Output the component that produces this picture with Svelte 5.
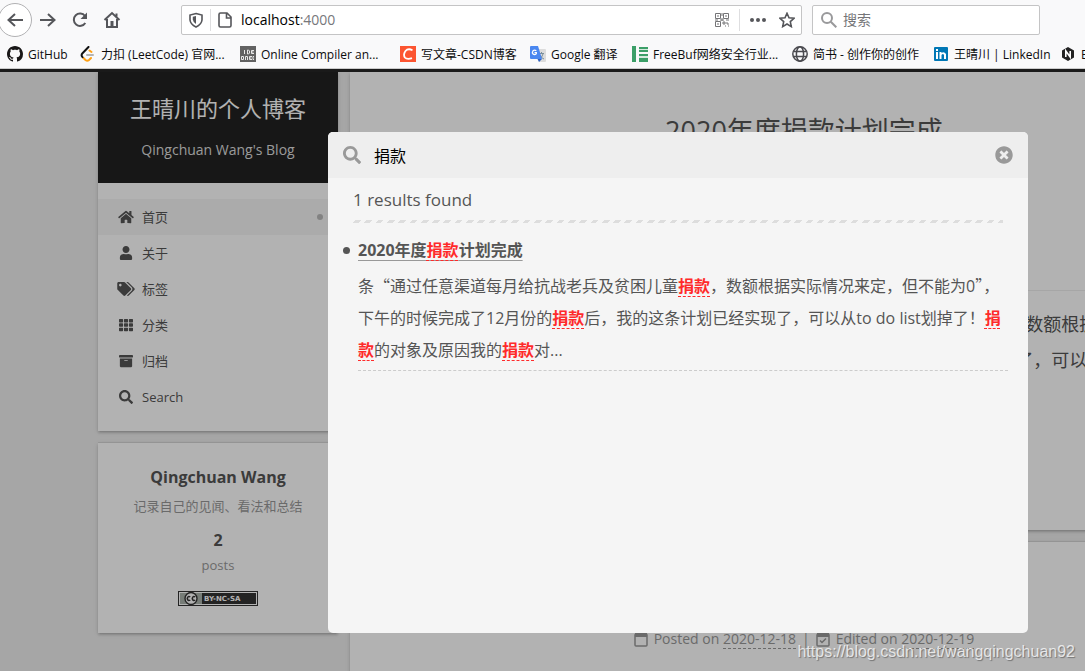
<script lang="ts">
  let query = $state("捐款");
  let address = $state("");
  let webSearch = $state("");

  const bookmarks = [
    { icon: "github", label: "GitHub" },
    { icon: "leetcode", label: "力扣 (LeetCode) 官网..." },
    { icon: "ideone", label: "Online Compiler an..." },
    { icon: "csdn", label: "写文章-CSDN博客" },
    { icon: "translate", label: "Google 翻译" },
    { icon: "freebuf", label: "FreeBuf网络安全行业..." },
    { icon: "globe", label: "简书 - 创作你的创作" },
    { icon: "linkedin", label: "王晴川 | LinkedIn" },
    { icon: "hexagon", label: "E" },
  ];

  const menu = [
    { icon: "home", label: "首页", active: true },
    { icon: "user", label: "关于" },
    { icon: "tags", label: "标签" },
    { icon: "th", label: "分类" },
    { icon: "archive", label: "归档" },
    { icon: "search", label: "Search" },
  ];

  const searchPath =
    "M505 442.7L405.3 343c-4.5-4.5-10.6-7-17-7H372c27.6-35.3 44-79.7 44-128C416 93.1 322.9 0 208 0S0 93.1 0 208s93.1 208 208 208c48.3 0 92.7-16.4 128-44v16.3c0 6.4 2.5 12.5 7 17l99.7 99.7c9.4 9.4 24.6 9.4 33.9 0l28.3-28.3c9.4-9.4 9.4-24.6.1-34zM208 336c-70.7 0-128-57.2-128-128 0-70.7 57.2-128 128-128 70.7 0 128 57.2 128 128 0 70.7-57.2 128-128 128z";

  const menuIcons: Record<string, { box: string; d: string }> = {
    home: {
      box: "0 0 576 512",
      d: "M280.37 148.26L96 300.11V464a16 16 0 0 0 16 16l112.06-.29a16 16 0 0 0 15.92-16V368a16 16 0 0 1 16-16h64a16 16 0 0 1 16 16v95.64a16 16 0 0 0 16 16.05L464 480a16 16 0 0 0 16-16V300L295.67 148.26a12.19 12.19 0 0 0-15.3 0zM571.6 251.47L488 182.56V44.05a12 12 0 0 0-12-12h-56a12 12 0 0 0-12 12v72.61L318.47 43a48 48 0 0 0-61 0L4.34 251.47a12 12 0 0 0-1.6 16.9l25.5 31A12 12 0 0 0 45.15 301l235.22-193.74a12.19 12.19 0 0 1 15.3 0L530.9 301a12 12 0 0 0 16.9-1.6l25.5-31a12 12 0 0 0-1.7-16.93z",
    },
    user: {
      box: "0 0 448 512",
      d: "M224 256c70.7 0 128-57.3 128-128S294.7 0 224 0 96 57.3 96 128s57.3 128 128 128zm89.6 32h-16.7c-22.2 10.2-46.9 16-72.9 16s-50.6-5.8-72.9-16h-16.7C60.2 288 0 348.2 0 422.4V464c0 26.5 21.5 48 48 48h352c26.5 0 48-21.5 48-48v-41.6c0-74.2-60.2-134.4-134.4-134.4z",
    },
    tags: {
      box: "0 0 640 512",
      d: "M497.941 225.941L286.059 14.059A48 48 0 0 0 252.118 0H48C21.49 0 0 21.49 0 48v204.118a48 48 0 0 0 14.059 33.941l211.882 211.882c18.744 18.745 49.136 18.746 67.882 0l204.118-204.118c18.745-18.745 18.745-49.137 0-67.882zM112 160c-26.51 0-48-21.49-48-48s21.49-48 48-48 48 21.49 48 48-21.49 48-48 48zm513.941 133.823L421.823 497.941c-18.745 18.745-49.137 18.745-67.882 0l-.36-.36L527.64 323.522c16.999-16.999 26.362-39.6 26.362-63.64s-9.362-46.641-26.362-63.64L331.397 0h48.721a48 48 0 0 1 33.941 14.059l211.882 211.882c18.745 18.745 18.745 49.137 0 67.882z",
    },
    th: {
      box: "0 0 512 512",
      d: "M24 32h101a24 24 0 0 1 24 24v80a24 24 0 0 1-24 24H24a24 24 0 0 1-24-24V56a24 24 0 0 1 24-24zM205 32h102a24 24 0 0 1 24 24v80a24 24 0 0 1-24 24H205a24 24 0 0 1-24-24V56a24 24 0 0 1 24-24zM387 32h101a24 24 0 0 1 24 24v80a24 24 0 0 1-24 24H387a24 24 0 0 1-24-24V56a24 24 0 0 1 24-24zM24 192h101a24 24 0 0 1 24 24v80a24 24 0 0 1-24 24H24a24 24 0 0 1-24-24v-80a24 24 0 0 1 24-24zM205 192h102a24 24 0 0 1 24 24v80a24 24 0 0 1-24 24H205a24 24 0 0 1-24-24v-80a24 24 0 0 1 24-24zM387 192h101a24 24 0 0 1 24 24v80a24 24 0 0 1-24 24H387a24 24 0 0 1-24-24v-80a24 24 0 0 1 24-24zM24 352h101a24 24 0 0 1 24 24v80a24 24 0 0 1-24 24H24a24 24 0 0 1-24-24v-80a24 24 0 0 1 24-24zM205 352h102a24 24 0 0 1 24 24v80a24 24 0 0 1-24 24H205a24 24 0 0 1-24-24v-80a24 24 0 0 1 24-24zM387 352h101a24 24 0 0 1 24 24v80a24 24 0 0 1-24 24H387a24 24 0 0 1-24-24v-80a24 24 0 0 1 24-24z",
    },
    archive: {
      box: "0 0 512 512",
      d: "M32 448c0 17.7 14.3 32 32 32h384c17.7 0 32-14.3 32-32V160H32v288zm160-212c0-6.6 5.4-12 12-12h104c6.6 0 12 5.4 12 12v8c0 6.6-5.4 12-12 12H204c-6.6 0-12-5.4-12-12v-8zM480 32H32C14.3 32 0 46.3 0 64v48c0 8.8 7.2 16 16 16h480c8.8 0 16-7.2 16-16V64c0-17.7-14.3-32-32-32z",
    },
    search: { box: "0 0 512 512", d: searchPath },
  };
</script>

{#snippet bookmarkIcon(name: string)}
  <svg width="16" height="16" viewBox="0 0 16 16" aria-hidden="true">
    {#if name === "github"}
      <path fill="#191717" d="M8 0C3.58 0 0 3.58 0 8c0 3.54 2.29 6.53 5.47 7.59.4.07.55-.17.55-.38 0-.19-.01-.82-.01-1.49-2.01.37-2.53-.49-2.69-.94-.09-.23-.48-.94-.82-1.13-.28-.15-.68-.52-.01-.53.63-.01 1.08.58 1.23.82.72 1.21 1.87.87 2.33.66.07-.52.28-.87.51-1.07-1.78-.2-3.64-.89-3.64-3.95 0-.87.31-1.59.82-2.15-.08-.2-.36-1.02.08-2.12 0 0 .67-.21 2.2.82.64-.18 1.32-.27 2-.27s1.36.09 2 .27c1.53-1.04 2.2-.82 2.2-.82.44 1.1.16 1.92.08 2.12.51.56.82 1.27.82 2.15 0 3.07-1.87 3.75-3.65 3.95.29.25.54.73.54 1.48 0 1.07-.01 1.93-.01 2.2 0 .21.15.46.55.38A8.01 8.01 0 0 0 16 8c0-4.42-3.58-8-8-8z" />
    {:else if name === "leetcode"}
      <g fill="none" stroke-width="2" stroke-linecap="round" stroke-linejoin="round">
        <path stroke="#b3b3b3" d="M7 9h6" />
        <path stroke="#ffa116" d="M11.500 6L9.500 4.500M3.500 12l2 2q1.800 1.500 3.500 0l2-2" />
        <path stroke="#111" d="M8.500 1L2.500 7.200q-1.800 2 0 4" />
      </g>
    {:else if name === "ideone"}
      <rect width="16" height="16" fill="#626262" />
      <path fill="none" stroke="#e8e8e8" d="M4.500 4v4M7.500 4v4h1l1-1V5l-1-1zM14 4.500h-2.500v3H14M11.500 6h2M1.500 10.500h2v3h-2zM5.500 14v-3.500h2V14M12 10.500H9.500v3H12M9.500 12h2M14 10.500h-1v3h1" />
    {:else if name === "csdn"}
      <rect width="16" height="16" fill="#fc5531" />
      <path fill="none" stroke="#fff" stroke-width="1.800" d="M12.500 4.200Q8 2 5.500 5Q3 8.500 4.800 11.500Q7 14 12 12.200" />
    {:else if name === "translate"}
      <path fill="#dcdcdc" d="M6 3h9q1 0 1 1v11q0 1-1 1H9z" />
      <path fill="none" stroke="#7b8f9b" d="M8 7.500h6M11.500 6v2M13 8q-1 4-4 5M10 9q1 3 4 4" />
      <path fill="#4a87f0" d="M1 0h7l4 13H1q-1 0-1-1V1q0-1 1-1z" />
      <path fill="#2d60c0" d="M7.500 13H12l-3 3z" />
      <path fill="none" stroke="#fff" stroke-width="1.200" d="M6.300 4.800Q4.500 3.500 3 4.800Q1.800 6.500 3 8Q4.500 9.200 6 8Q6.500 7.500 6.400 6.700H4.500" />
    {:else if name === "freebuf"}
      <path fill="#3c9f68" d="M0 0h4v16H0zM7 1h9v5H7zM7 8h9v8H7z" />
      <path fill="#d6eadf" d="M7 3h9v1H7zM7 10h9v2H7z" />
    {:else if name === "globe"}
      <g fill="none" stroke="#4a4a4f" stroke-width="1.500">
        <circle cx="8" cy="8" r="7.200" />
        <ellipse cx="8" cy="8" rx="3.600" ry="7.200" />
        <path d="M1.500 5.500h13M1.500 10.500h13" />
      </g>
    {:else if name === "linkedin"}
      <rect x="1" y="1" width="14" height="14" rx="1" fill="#0077b5" />
      <path fill="#fff" d="M3 6h2v7H3zM3 3h2v2H3zM6.500 6h2v1q2.500-2 4.500 1v5h-2V9q-1-2-2.500 0v4h-2z" />
    {:else}
      <path fill="#222" d="M8 1l6 3.500v7L8 15l-6-3.500v-7z" />
      <path fill="none" stroke="#fff" stroke-width="1.600" d="M5.800 11V5l4.400 6V5" />
    {/if}
  </svg>
{/snippet}

<div class="browser">
  <header class="chrome">
    <div class="toolbar">
      <button class="tool back" aria-label="Back">
        <svg width="18" height="18" viewBox="0 0 18 18"><path d="M9 3L2.500 9L9 15M3 9h14" /></svg>
      </button>
      <button class="tool" aria-label="Forward">
        <svg width="18" height="18" viewBox="0 0 18 18"><path d="M9 3l6.500 6L9 15M15 9H1" /></svg>
      </button>
      <button class="tool" aria-label="Reload">
        <svg width="18" height="18" viewBox="0 0 18 18">
          <path d="M14 5A6.200 6.200 0 1 0 14.300 12" /><path class="solid" d="M16 1.500V8H9.500z" />
        </svg>
      </button>
      <button class="tool" aria-label="Home">
        <svg width="18" height="18" viewBox="0 0 18 18">
          <path d="M1.500 9L9 2l7.500 7M4 8v8h10V8M13.500 2.500v3" /><path class="solid" d="M7.500 10h3v6h-3z" />
        </svg>
      </button>

      <div class="urlbar">
        <svg width="14" height="16" viewBox="0 0 14 16" aria-hidden="true">
          <path d="M7 1.500L13 3v5q-.5 4.500-6 7q-5.500-2.500-6-7V3z" /><path class="solid" d="M7 4v8Q4 10 3.800 7.500V4.800z" />
        </svg>
        <i></i>
        <svg width="14" height="16" viewBox="0 0 14 16" aria-hidden="true">
          <path d="M2.500 1H9l4 4v8.500q0 1.500-1.500 1.500h-9Q1 15 1 13.500v-11Q1 1 2.500 1zM8.500 1.500V6H13" />
        </svg>
        <label class="url">
          <span>localhost<em>:4000</em></span>
          <input type="text" aria-label="Address" bind:value={address} />
        </label>
        <button class="mini" aria-label="QR code">
          <svg width="14" height="14" viewBox="0 0 14 14">
            <path class="qr" d="M.5.5h5v5h-5zM8.500.5h5v5h-5zM.5 8.500h5v5h-5zM3 2v2M11 2v2M3 10v2M7 0v3M7 5v3M0 7h3M5 7h4M11 7h3M8 9h2v2H8zM12 9v2h2M10 13h1M13 13h1" />
          </svg>
        </button>
        <i></i>
        <button class="mini" aria-label="Page actions">
          <svg width="16" height="16" viewBox="0 0 16 16">
            <circle class="solid" cx="2" cy="8" r="2" /><circle class="solid" cx="8" cy="8" r="2" /><circle class="solid" cx="14" cy="8" r="2" />
          </svg>
        </button>
        <button class="mini" aria-label="Bookmark this page">
          <svg width="16" height="16" viewBox="0 0 16 16">
            <path d="M8 1.300l2 4.500 5 .5-3.700 3.300 1 5L8 12l-4.300 2.600 1-5L1 6.300l5-.5z" />
          </svg>
        </button>
      </div>

      <label class="websearch">
        <svg width="16" height="16" viewBox="0 0 16 16" aria-hidden="true"><circle cx="6" cy="6" r="5" /><path d="M9.800 9.800l5.500 5.500" /></svg>
        <input type="text" placeholder="搜索" aria-label="搜索" bind:value={webSearch} />
      </label>
    </div>

    <nav class="bookmarks">
      {#each bookmarks as b}
        <a href="#{b.icon}">{@render bookmarkIcon(b.icon)}<span>{b.label}</span></a>
      {/each}
    </nav>
  </header>

  <div class="page">
    <div class="container">
      <aside>
        <div class="card">
          <div class="brand">
            <h1>王晴川的个人博客</h1>
            <p>Qingchuan Wang's Blog</p>
          </div>
          <ul class="menu">
            {#each menu as item}
              <li>
                <a href="#{item.icon}" class:active={item.active}>
                  <svg viewBox={menuIcons[item.icon].box} aria-hidden="true"><path d={menuIcons[item.icon].d} /></svg>
                  <span>{item.label}</span>
                </a>
              </li>
            {/each}
          </ul>
        </div>

        <div class="card profile">
          <p class="name">Qingchuan Wang</p>
          <p class="desc">记录自己的见闻、看法和总结</p>
          <a class="count" href="#archive"><b>2</b><span>posts</span></a>
          <a class="license" href="#license" aria-label="Creative Commons">
            <svg width="80" height="15" viewBox="0 0 80 15">
              <rect x=".5" y=".5" width="79" height="14" fill="#fff" stroke="#333" />
              <rect x="2" y="2" width="22" height="11" fill="#aab2ab" />
              <rect x="24" y="2" width="54" height="11" fill="#333" />
              <circle cx="13" cy="7.500" r="6" fill="#fff" stroke="#333" stroke-width="1.400" />
              <path fill="none" stroke="#333" stroke-width="1.600" d="M12.300 5.900q-2.500-1.300-3 1.600q.5 2.900 3 1.600M17.300 5.900q-2.500-1.300-3 1.600q.5 2.900 3 1.600" />
              <text x="26" y="10">BY-NC-SA</text>
            </svg>
          </a>
        </div>
      </aside>

      <main>
        <article class="card first">
          <h2>2020年度捐款计划完成</h2>
          <div class="body">
            2020年初定下的计划里有一条<q>通过任意渠道每月给抗战老兵及贫困儿童捐款，数额根据实际情况来定，<br />
            但不能为0</q>，今天下午的时候完成了 12 月份的捐款后，我的这条计划已经实现了，可以从to do list划掉了！
          </div>
        </article>
        <article class="card second">
          <div class="meta">
            <svg width="14" height="16" viewBox="0 0 14 16" aria-hidden="true">
              <rect x="1" y="3" width="12" height="12" rx="1" /><path class="bar" d="M1 2h12v4H1zM3 1h2v2H3zM9 1h2v2H9z" />
            </svg>
            <span>Posted on <time>2020-12-18</time></span>
            <i>|</i>
            <svg width="14" height="16" viewBox="0 0 14 16" aria-hidden="true">
              <rect x="1" y="3" width="12" height="12" rx="1" /><path class="bar" d="M1 2h12v4H1zM3 1h2v2H3zM9 1h2v2H9z" /><path d="M4 9.500l2 2 4-4" />
            </svg>
            <span>Edited on <time>2020-12-19</time></span>
          </div>
        </article>
      </main>
    </div>

    <div class="overlay">
      <div class="popup" role="dialog" aria-label="Search">
        <div class="popup-head">
          <svg width="18" height="18" viewBox="0 0 512 512" aria-hidden="true"><path d={searchPath} /></svg>
          <input type="text" aria-label="Search" bind:value={query} />
          <button aria-label="Close">
            <svg width="18" height="18" viewBox="0 0 512 512">
              <path d="M256 8C119 8 8 119 8 256s111 248 248 248 248-111 248-248S393 8 256 8zm121.600 313.100c4.700 4.700 4.700 12.300 0 17L338 377.600c-4.700 4.700-12.300 4.700-17 0L256 312l-65.100 65.600c-4.700 4.700-12.300 4.700-17 0L134.400 338c-4.700-4.700-4.700-12.300 0-17l65.600-65-65.600-65.100c-4.700-4.700-4.700-12.300 0-17l39.600-39.600c4.700-4.700 12.300-4.700 17 0l65 65.700 65.100-65.600c4.700-4.700 12.300-4.700 17 0l39.600 39.600c4.700 4.700 4.700 12.300 0 17L312 256l65.600 65.100z" />
            </svg>
          </button>
        </div>
        <div class="results">
          <p class="stats">1 results found</p>
          <div class="rule"></div>
          <ul>
            <li>
              <a class="title" href="#post">2020年度<mark>捐款</mark>计划完成</a>
              <p class="excerpt">
                条<q>通过任意渠道每月给抗战老兵及贫困儿童<mark>捐款</mark>，数额根据实际情况来定，但不能为0</q>，下午的时候完成了12月份的<mark>捐款</mark>后，我的这条计划已经实现了，可以从to do list划掉了！<mark>捐款</mark>的对象及原因我的<mark>捐款</mark>对...
              </p>
            </li>
          </ul>
        </div>
      </div>
    </div>
  </div>
  <div class="watermark">https://blog.csdn.net/wangqingchuan92</div>
</div>

<style>
  :global(body) {
    margin: 0;
    overflow: hidden;
  }
  .browser {
    position: relative;
    display: flex;
    flex-direction: column;
    height: 100vh;
    overflow: hidden;
    font-family: "Open Sans", "Noto Sans CJK SC", sans-serif;
  }
  h1, h2, p, ul {
    margin: 0;
    padding: 0;
    font-weight: 400;
  }
  ul {
    list-style: none;
  }
  a {
    color: inherit;
    text-decoration: none;
  }
  button {
    display: grid;
    place-items: center;
    padding: 0;
    border: 0;
    background: none;
  }
  input {
    min-width: 0;
    padding: 0;
    border: 0;
    outline: 0;
    background: none;
    font: inherit;
  }
  /* full-width quotation marks */
  q {
    quotes: "“" "”";
  }
  q::before,
  q::after {
    font-family: "Noto Sans CJK SC", sans-serif;
    line-height: 1;
  }

  /* browser chrome */
  .chrome {
    flex: none;
    background: #f9f9fa;
    border-bottom: 1px solid #ccc;
  }
  .toolbar {
    display: flex;
    align-items: center;
    height: 40px;
  }
  .toolbar svg {
    flex: none;
    fill: none;
    stroke: #55565a;
    stroke-width: 2;
  }
  .toolbar .solid {
    fill: #55565a;
    stroke: none;
  }
  .toolbar .qr {
    stroke: #747477;
    stroke-width: 1;
  }
  .tool {
    width: 32px;
    height: 32px;
  }
  .back {
    box-sizing: border-box;
    width: 34px;
    height: 34px;
    margin-left: -2px;
    border: 1px solid #b1b1b3;
    border-radius: 50%;
    background: #fff;
  }
  .urlbar,
  .websearch {
    box-sizing: border-box;
    display: flex;
    align-items: center;
    height: 30px;
    border: 1px solid #c4c4c5;
    border-radius: 2px;
    background: #fff;
    font-size: 14px;
    line-height: 20px;
  }
  .urlbar {
    flex: 0 0 621px;
    gap: 7px;
    margin-left: 53px;
    padding: 0 3px 0 7px;
  }
  .urlbar svg {
    stroke-width: 1.6;
  }
  .urlbar i {
    width: 1px;
    height: 22px;
    background: #dedee0;
  }
  .url {
    flex: 1;
    display: flex;
    padding-left: 2px;
  }
  .url em {
    color: #77777b;
    font-style: normal;
  }
  .url input {
    flex: 1;
  }
  .mini {
    margin: 0 3px;
  }
  .websearch {
    flex: 0 0 228px;
    gap: 6px;
    margin-left: 10px;
    padding: 0 8px;
  }
  .websearch svg {
    stroke: #99999b;
  }
  .websearch input {
    flex: 1;
  }
  .websearch input::placeholder {
    color: #757578;
    opacity: 1;
  }
  .bookmarks {
    display: grid;
    grid-template-columns: 73px 160px 160px 130px 102px 160px 141px 127px 60px;
    align-items: center;
    height: 28px;
    padding-left: 7px;
    font-size: 12px;
    white-space: nowrap;
  }
  .bookmarks a {
    display: flex;
    align-items: center;
    gap: 5px;
    color: #0c0c0d;
  }
  .bookmarks svg {
    flex: none;
  }

  /* blog */
  .page {
    position: relative;
    flex: 1;
    min-height: 0;
    overflow: hidden;
    box-sizing: border-box;
    border-top: 3px solid #1a1a1a;
    background: #eee;
    color: #555;
  }
  .container {
    display: flex;
    align-items: flex-start;
    gap: 12px;
    width: 1160px;
    margin-left: 98px;
  }
  aside {
    flex: none;
    width: 240px;
    display: grid;
    gap: 12px;
  }
  .card {
    background: #fff;
    box-shadow: 0 2px 2px 0 rgba(0, 0, 0, 0.12), 0 3px 1px -2px rgba(0, 0, 0, 0.06), 0 1px 5px 0 rgba(0, 0, 0, 0.12), 0 -1px 0 0 rgba(0, 0, 0, 0.08);
  }
  .brand {
    padding: 18px 0 22px;
    background: #222;
    color: #fff;
    text-align: center;
  }
  .brand h1 {
    font-size: 22px;
    line-height: 36px;
  }
  .brand p {
    margin-top: 12px;
    color: #ddd;
    font-size: 14px;
    line-height: 23px;
  }
  .menu {
    padding: 16px 0;
    font-size: 13px;
  }
  .menu a {
    display: flex;
    align-items: center;
    gap: 7px;
    box-sizing: border-box;
    height: 36px;
    padding: 0 15px 1px 19px;
  }
  .menu svg {
    width: 18px;
    height: 14px;
    fill: #555;
  }
  .menu .active {
    background: #f5f5f5;
  }
  .menu .active::after {
    content: "";
    width: 6px;
    height: 6px;
    margin-left: auto;
    border-radius: 50%;
    background: #bbb;
  }
  .profile {
    display: flex;
    flex-direction: column;
    align-items: center;
    padding: 20px 0 27px;
  }
  .name {
    font-size: 16px;
    font-weight: 700;
    line-height: 28px;
  }
  .desc {
    margin-top: 3px;
    color: #999;
    font-size: 13px;
    line-height: 24px;
  }
  .count {
    display: grid;
    margin-top: 9px;
    text-align: center;
  }
  .count b {
    font-size: 16px;
    line-height: 26px;
  }
  .count span {
    color: #999;
    font-size: 13px;
    line-height: 24px;
  }
  .license {
    display: flex;
    margin-top: 14px;
  }
  .license text {
    fill: #fff;
    font: bold 7px "DejaVu Sans", sans-serif;
  }
  main {
    flex: 1;
    min-width: 0;
    display: grid;
    grid-template-columns: minmax(0, 1fr);
    gap: 12px;
  }
  .first {
    height: 458px;
  }
  .second {
    height: 300px;
  }
  .first h2 {
    padding-top: 39px;
    font-size: 27px;
    line-height: 40px;
    text-align: center;
  }
  .body {
    margin-top: 139px;
    padding: 15px 40px;
    border-top: 1px solid #eee;
    font-size: 18px;
    line-height: 36px;
    white-space: nowrap;
  }
  .meta {
    display: flex;
    justify-content: center;
    align-items: center;
    gap: 6px;
    padding-top: 85px;
    color: #999;
    font-size: 14px;
    line-height: 24px;
  }
  .meta svg {
    fill: none;
    stroke: #999;
    stroke-width: 1.5;
  }
  .meta .bar {
    fill: #999;
    stroke: none;
  }
  .meta i {
    font-style: normal;
  }
  .meta time {
    border-bottom: 1px dashed #999;
  }

  /* search popup */
  .overlay {
    position: absolute;
    inset: 0;
    padding: 60px 0 0 328px;
    background: rgba(0, 0, 0, 0.3);
  }
  .popup {
    width: 700px;
    height: 501px;
    overflow: hidden;
    border-radius: 5px;
    background: #f5f5f5;
  }
  .popup-head {
    display: flex;
    align-items: center;
    gap: 13px;
    height: 46px;
    padding: 0 15px;
    background: #eee;
  }
  .popup-head svg {
    fill: #999;
  }
  .popup-head input {
    flex: 1;
    font-size: 16px;
  }
  .results {
    padding: 0 20px 0 25px;
  }
  .stats {
    padding-top: 6px;
    font-size: 17px;
    line-height: 32px;
  }
  .rule {
    height: 3px;
    margin: 4px 5px 11px 0;
    background: repeating-linear-gradient(-45deg, #ddd, #ddd 4px, transparent 4px, transparent 8px);
  }
  .results li {
    position: relative;
    padding-left: 5px;
    font-size: 16px;
    line-height: 32px;
  }
  .results li::before {
    content: "";
    position: absolute;
    left: -10px;
    top: 13px;
    width: 7px;
    height: 7px;
    border-radius: 50%;
    background: #555;
  }
  .title {
    font-weight: 700;
    text-decoration: underline 1px #999;
    text-underline-offset: 4px;
  }
  .excerpt {
    margin-top: 4px;
    border-bottom: 1px dashed #ccc;
    padding-bottom: 4px;
  }
  mark {
    background: none;
    color: #ff2a2a;
    font-weight: 700;
    text-decoration: underline dashed 1px #ff2a2a;
    text-underline-offset: 4px;
  }
  .watermark {
    position: absolute;
    right: 10px;
    bottom: 10px;
    color: rgba(255, 255, 255, 0.75);
    font: 16px/18px "Liberation Sans", sans-serif;
    text-shadow: 1px 1px 1px rgba(0, 0, 0, 0.35);
  }
</style>
